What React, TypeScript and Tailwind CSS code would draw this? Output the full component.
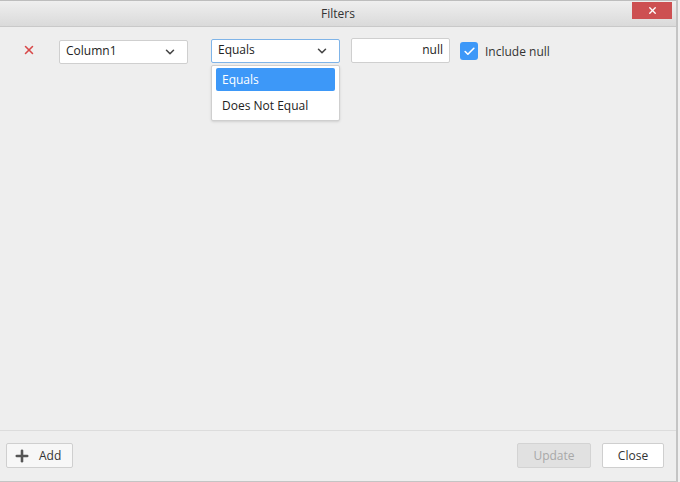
import { Check, ChevronDown, Plus, X } from "lucide-react";

const font = { fontFamily: '"Open Sans", "Noto Sans", sans-serif' };

function Select({ value, focused }: { value: string; focused?: boolean }) {
  return (
    <div
      className={`flex h-[24px] w-[129px] items-center justify-between rounded-[2px] border bg-white pl-[6px] pr-[10px] text-[12px] text-[#222] ${
        focused ? "border-[#7fb4e8]" : "border-[#cfcfcf]"
      }`}
    >
      <span className="-mt-[3px]">{value}</span>
      <ChevronDown size={14} strokeWidth={2.6} className="text-[#444]" />
    </div>
  );
}

export default function App() {
  return (
    <div className="h-[482px] w-[680px] bg-[#f0f0f0] pr-[2px]" style={font}>
      <div className="flex h-full flex-col border-r-2 border-b border-[#c4c4c4] bg-[#eeeeee]">
        {/* Title bar */}
        <div className="relative flex h-[27px] shrink-0 items-center justify-center border-b border-[#c9c9c9] border-t border-t-[#bdbdbd] bg-gradient-to-b from-[#efefef] to-[#dadada]">
          <span className="text-[12px] text-[#333]">Filters</span>
          <div className="absolute right-[4px] top-[1px] flex h-[17px] w-[40px] items-center justify-center bg-[#cd5052]">
            <X size={11} strokeWidth={3} className="text-white" />
          </div>
        </div>

        {/* Filter row */}
        <div className="flex flex-1 items-start pt-[11px]">
          <div className="ml-[22px] mt-[5px] text-[#d84848]">
            <X size={14} strokeWidth={2.6} />
          </div>
          <div className="ml-[23px] mt-[2px]">
            <Select value="Column1" />
          </div>
          <div className="relative ml-[23px] mt-[1px]">
            <Select value="Equals" focused />
            <div className="absolute left-0 top-[26px] w-[129px] rounded-[2px] border border-[#cfcfcf] bg-white px-[4px] pb-[1px] pt-[2px] text-[12px] text-[#222] shadow-sm">
              <div className="flex h-[23px] items-center rounded-[2px] bg-[#3d98f8] px-[6px] text-white">
                Equals
              </div>
              <div className="flex h-[28px] items-center px-[6px] pt-[2px]">Does Not Equal</div>
            </div>
          </div>
          <div className="ml-[11px] flex h-[25px] w-[99px] items-center justify-end rounded-[2px] border border-[#cfcfcf] bg-white pr-[6px] text-[12px] text-[#222]">
            <span className="-mt-[2px]">null</span>
          </div>
          <div className="ml-[10px] mt-[3px] flex items-center gap-[7px]">
            <div className="flex h-[18px] w-[18px] items-center justify-center rounded-[3px] bg-[#3d98f8]">
              <Check size={13} strokeWidth={3} className="text-white" />
            </div>
            <span className="mt-[2px] text-[12px] text-[#333]">Include null</span>
          </div>
        </div>

        {/* Footer */}
        <div className="flex h-[51px] shrink-0 items-start justify-between border-t border-[#dcdcdc] pl-[6px] pr-[12px] pt-[12px]">
          <div className="flex h-[25px] w-[67px] items-center gap-[8px] rounded-[2px] border border-[#cfcfcf] bg-[#f7f7f7] pl-[6px] text-[12px] text-[#333]">
            <Plus size={18} strokeWidth={3.4} className="text-[#555]" />
            <span>Add</span>
          </div>
          <div className="flex gap-[11px]">
            <div className="flex h-[25px] w-[74px] items-center justify-center rounded-[2px] border border-[#d3d3d3] bg-[#e1e1e1] text-[12px] text-[#a8a8a8]">
              Update
            </div>
            <div className="flex h-[25px] w-[62px] items-center justify-center rounded-[2px] border border-[#cfcfcf] bg-white text-[12px] text-[#333]">
              Close
            </div>
          </div>
        </div>
      </div>
    </div>
  );
}
